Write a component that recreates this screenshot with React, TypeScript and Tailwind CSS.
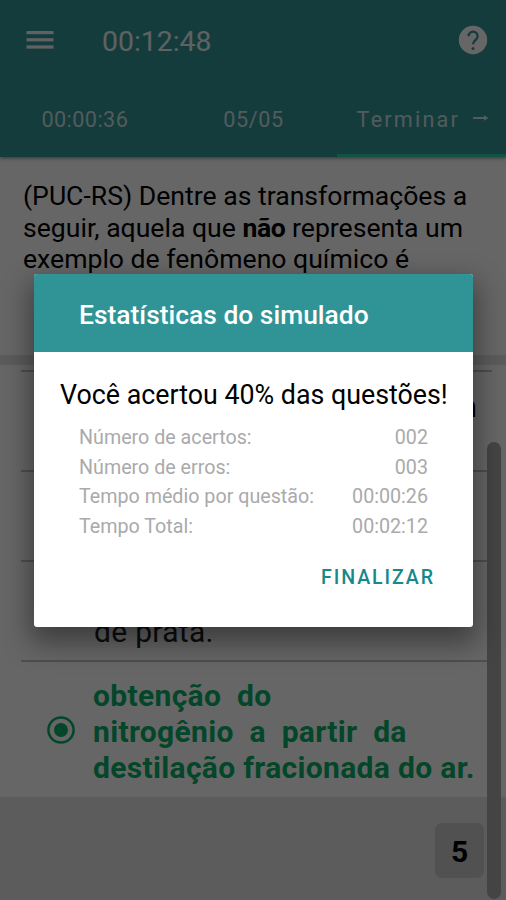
import { useState } from 'react';

interface Stat {
  label: string;
  value: string;
}

const stats: Stat[] = [
  { label: 'Número de acertos:', value: '002' },
  { label: 'Número de erros:', value: '003' },
  { label: 'Tempo médio por questão:', value: '00:00:26' },
  { label: 'Tempo Total:', value: '00:02:12' },
];

function Header() {
  return (
    <header className="h-[157px] flex flex-col bg-[#349698] text-white/90 relative shadow-[0_1px_4px_rgba(0,0,0,0.5)]">
      <div className="h-[80px] flex items-center pl-[26px] pr-[18px]">
        <svg width="28" height="20" viewBox="0 0 28 20" fill="currentColor">
          <rect x="0.5" y="1" width="27" height="3.2" />
          <rect x="0.5" y="8.2" width="27" height="3.2" />
          <rect x="0.5" y="15.4" width="27" height="3.2" />
        </svg>
        <span className="ml-[48px] mt-[4px] text-[28.4px] leading-none">00:12:48</span>
        <svg className="ml-auto" width="30" height="30" viewBox="0 0 30 30">
          <circle cx="15" cy="15" r="14.2" fill="white" />
          <path d="M10.6 11.2a4.5 4.5 0 1 1 7.4 3.4c-1.9 1.6-3 2.300-3 4.600" fill="none" stroke="#349698" strokeWidth="2.3" />
          <circle cx="15" cy="23.500" r="1.5" fill="#349698" />
        </svg>
      </div>
      <nav className="flex-1 grid grid-cols-3 text-[21.6px] leading-none text-white/75">
        <div className="flex items-center justify-center pt-[2px] pl-px">
          <span className="tracking-[0.45px]">00:00:36</span>
        </div>
        <div className="flex items-center justify-center pt-[2px] pl-px">
          <span className="tracking-[0.6px]">05/05</span>
        </div>
        <div className="flex items-center justify-end pr-[17px] border-b-[3px] border-[#2cd2b0] pt-[5px]">
          <span className="tracking-[2.2px]">Terminar</span>
          <svg className="ml-[13px] -mt-[4px]" width="16" height="8" viewBox="0 0 16 8" fill="currentColor">
            <path d="M0 3h11V1.2L15.5 4 11 6.8V5H0z" />
          </svg>
        </div>
      </nav>
    </header>
  );
}

function Question() {
  return (
    <section className="h-[198px] pt-[23px] pl-[23px] text-[26.6px] leading-[31.5px] text-black whitespace-nowrap">
      <p>(PUC-RS) Dentre as transformações a</p>
      <p>seguir, aquela que <b className="font-bold tracking-[-0.4px]">não</b> representa um</p>
      <p>exemplo de fenômeno químico é</p>
    </section>
  );
}

function Options() {
  return (
    <section className="h-[432px] flex flex-col pl-[21px] pr-[14px] text-[30px] leading-[36px] whitespace-nowrap">
      <div className="h-[7px] border-b-2 border-[#c4c4c4]" />
      <div className="h-[100px] border-b-2 border-[#c4c4c4] flex justify-end pr-[15px] pt-[17px]">m</div>
      <div className="h-[90px] border-b-2 border-[#c4c4c4]" />
      <div className="h-[100px] border-b-2 border-[#c4c4c4] flex items-end pl-[73px] pb-[10px] text-[#222]">
        <span className="tracking-[0.3px]">de prata.</span>
      </div>
      <div className="flex-1 flex items-center text-[#08b068] font-bold">
        <svg className="ml-[25px] mr-[17px]" width="30" height="30" viewBox="0 0 30 30">
          <circle cx="15" cy="15" r="12.6" fill="none" stroke="currentColor" strokeWidth="2.5" />
          <circle cx="15" cy="15" r="7" fill="currentColor" />
        </svg>
        <div className="pt-[4px] tracking-[0.33px]">
          <p className="[word-spacing:8px]">obtenção do</p>
          <p className="[word-spacing:8px]">nitrogênio a partir da</p>
          <p>destilação fracionada do ar.</p>
        </div>
      </div>
    </section>
  );
}

function StatsDialog({ onClose }: { onClose: () => void }) {
  return (
    <div className="absolute inset-0 bg-black/60 flex justify-start items-start pl-[34px] pt-[274px]">
      <div className="w-[439px] h-[353px] bg-white rounded-[3px] overflow-hidden flex flex-col shadow-[0_12px_28px_4px_rgba(0,0,0,0.4)]">
        <h2 className="h-[78px] shrink-0 bg-[#309496] text-white font-medium text-[26.4px] leading-none flex items-center pl-[45px] pt-[4px] whitespace-nowrap">
          Estatísticas do simulado
        </h2>
        <p className="mt-[27px] pl-[26px] text-[26.8px] leading-[32px] text-black whitespace-nowrap">
          Você acertou 40% das questões!
        </p>
        <dl className="mt-[12px] pl-[45px] pr-[45px] text-[19.7px] text-[#aaa]">
          {stats.map(s => (
            <div key={s.label} className="flex justify-between h-[29.6px] leading-[29.6px]">
              <dt>{s.label}</dt>
              <dd>{s.value}</dd>
            </div>
          ))}
        </dl>
        <button onClick={onClose} className="self-end mr-[38px] mt-[25px] text-[19.6px] leading-[24px] font-medium tracking-[1.9px] text-[#17898a]">
          FINALIZAR
        </button>
      </div>
    </div>
  );
}

export default function App() {
  const [open, setOpen] = useState(true);

  return (
    <div className="relative w-[506px] h-[900px] overflow-hidden bg-white font-[Roboto,sans-serif]">
      <Header />
      <Question />
      <div className="h-[10px] bg-[#e4e4e4]" />
      <Options />
      <footer className="h-[103px] bg-[#e6e6e6] flex items-start justify-end pt-[26px] pr-[22px]">
        <span className="w-[49px] h-[55px] rounded-[7px] bg-[#cbcbcb] flex items-center justify-center pt-[3px] text-[30px] leading-none font-bold text-black">
          5
        </span>
      </footer>
      <div className="absolute top-[442px] right-[5px] w-[14px] h-[457px] rounded-full bg-[#aaa]" />
      {open && <StatsDialog onClose={() => setOpen(false)} />}
    </div>
  );
}
